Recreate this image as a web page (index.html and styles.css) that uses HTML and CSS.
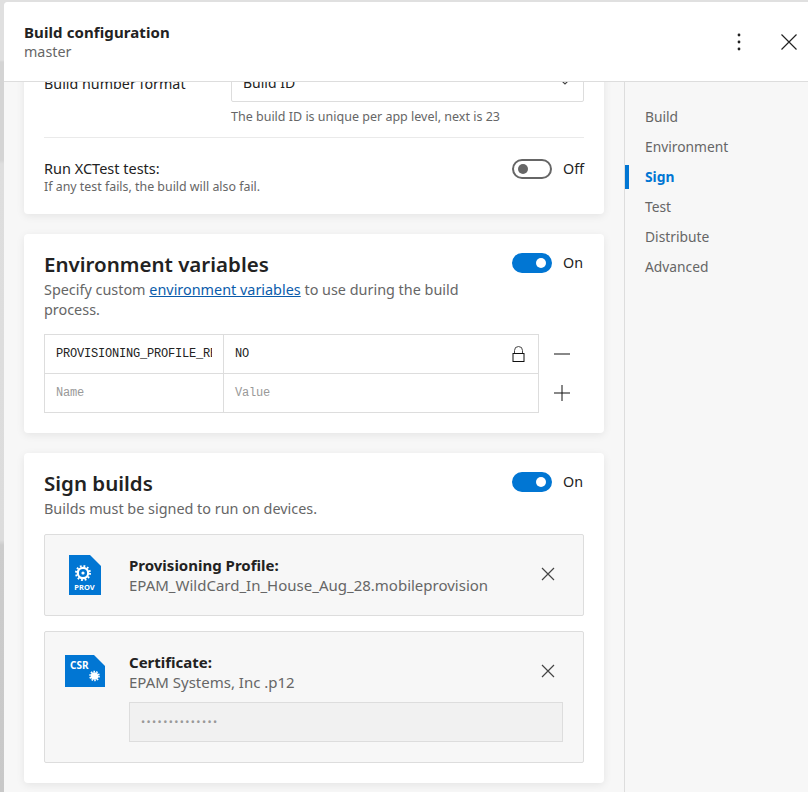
FILE: index.html
```html
<!DOCTYPE html>
<html lang="en">

<head>
    <meta charset="UTF-8">
    <meta name="viewport" content="width=device-width, initial-scale=1.0">
    <title>Build configuration</title>
    <link rel="stylesheet" href="styles.css">
</head>

<body>
    <div class="modal">
        <header class="modal-header">
            <div>
                <h1>Build configuration</h1>
                <div class="branch">master</div>
            </div>
            <div class="header-actions">
                <svg width="4" height="18" viewBox="0 0 4 18">
                    <circle cx="2" cy="2" r="1.4" fill="#222" />
                    <circle cx="2" cy="9" r="1.4" fill="#222" />
                    <circle cx="2" cy="16" r="1.4" fill="#222" />
                </svg>
                <svg width="16" height="16" viewBox="0 0 16 16">
                    <path d="M0.5 0.5L15.5 15.5M15.5 0.5L0.5 15.5" stroke="#222" stroke-width="1.2" fill="none" />
                </svg>
            </div>
        </header>

        <div class="modal-body">
            <main class="content">
                <!-- First card is scrolled under the header -->
                <section class="card card-build">
                    <div class="format-row">
                        <label>Build number format</label>
                        <div class="format-field">
                            <div class="select">
                                <span>Build ID</span>
                                <svg width="8" height="5" viewBox="0 0 8 5">
                                    <path d="M0.8 0.8L4 4L7.2 0.8" stroke="#444" stroke-width="1.2" fill="none" />
                                </svg>
                            </div>
                            <p class="hint">The build ID is unique per app level, next is 23</p>
                        </div>
                    </div>
                    <div class="xctest-row">
                        <div>
                            <div class="xctest-title">Run XCTest tests:</div>
                            <div class="xctest-sub">If any test fails, the build will also fail.</div>
                        </div>
                        <div class="switch-wrap">
                            <span class="switch"></span>
                            <span class="switch-label">Off</span>
                        </div>
                    </div>
                </section>

                <section class="card">
                    <div class="card-head">
                        <div class="card-intro">
                            <h2>Environment variables</h2>
                            <p>Specify custom <a href="#">environment variables</a> to use during the build process.</p>
                        </div>
                        <div class="switch-wrap">
                            <span class="switch on"></span>
                            <span class="switch-label">On</span>
                        </div>
                    </div>
                    <div class="env-wrap">
                        <div class="env-table">
                            <div class="env-row">
                                <div class="env-name"><span>PROVISIONING_PROFILE_REQUIRED</span></div>
                                <div class="env-value">
                                    <span>NO</span>
                                    <svg width="13" height="16" viewBox="0 0 13 16">
                                        <path d="M2.5 7V4.5a4 4 0 0 1 8 0V7" stroke="#444" fill="none" />
                                        <rect x="1" y="7.5" width="11" height="8" stroke="#111" fill="#fff" />
                                    </svg>
                                </div>
                            </div>
                            <div class="env-row">
                                <div class="env-name placeholder">Name</div>
                                <div class="env-value placeholder">Value</div>
                            </div>
                        </div>
                        <div class="env-actions">
                            <svg width="16" height="16" viewBox="0 0 16 16">
                                <path d="M0 8H16" stroke="#888" stroke-width="2" />
                            </svg>
                            <svg width="16" height="16" viewBox="0 0 16 16">
                                <path d="M0 8H16" stroke="#888" stroke-width="2" />
                                <path d="M8 0V16" stroke="#111" stroke-width="1" />
                            </svg>
                        </div>
                    </div>
                </section>

                <section class="card">
                    <div class="card-head">
                        <div class="card-intro">
                            <h2>Sign builds</h2>
                            <p>Builds must be signed to run on devices.</p>
                        </div>
                        <div class="switch-wrap">
                            <span class="switch on"></span>
                            <span class="switch-label">On</span>
                        </div>
                    </div>

                    <div class="file-box file-prov">
                        <svg class="file-icon" width="32" height="40" viewBox="0 0 32 40">
                            <path d="M0 0H21L32 11V40H0Z" fill="#0176d3" />
                            <g fill="none" stroke="#fff">
                                <circle cx="14" cy="18" r="5.2" stroke-width="2.2" />
                                <circle cx="14" cy="18" r="7" stroke-width="2" stroke-dasharray="1.8 1.9" />
                            </g>
                            <circle cx="14" cy="18" r="1.6" fill="#fff" />
                            <text x="15.5" y="34.5" class="icon-label" text-anchor="middle">PROV</text>
                        </svg>
                        <div class="file-info">
                            <div class="file-title">Provisioning Profile:</div>
                            <div class="file-name">EPAM_WildCard_In_House_Aug_28.mobileprovision</div>
                        </div>
                        <svg class="file-remove" width="14" height="14" viewBox="0 0 14 14">
                            <path d="M1 1L13 13M13 1L1 13" stroke="#444" stroke-width="1.2" fill="none" />
                        </svg>
                    </div>

                    <div class="file-box file-cert">
                        <svg class="file-icon" width="40" height="32" viewBox="0 0 40 32">
                            <path d="M0 0H29L40 11V32H0Z" fill="#0176d3" />
                            <text x="5" y="13.5" class="icon-label cert-label">CSR</text>
                            <circle cx="29.5" cy="21" r="3.8" fill="#fff" />
                            <circle cx="29.5" cy="21" r="4.5" fill="none" stroke="#fff" stroke-width="1.6" stroke-dasharray="1.6 1.2" />
                        </svg>
                        <div class="file-info">
                            <div class="file-title">Certificate:</div>
                            <div class="file-name">EPAM Systems, Inc .p12</div>
                            <div class="password">••••••••••••••</div>
                        </div>
                        <svg class="file-remove" width="14" height="14" viewBox="0 0 14 14">
                            <path d="M1 1L13 13M13 1L1 13" stroke="#444" stroke-width="1.2" fill="none" />
                        </svg>
                    </div>
                </section>
            </main>

            <nav class="side-nav">
                <a href="#">Build</a>
                <a href="#">Environment</a>
                <a href="#" class="active">Sign</a>
                <a href="#">Test</a>
                <a href="#">Distribute</a>
                <a href="#">Advanced</a>
            </nav>
        </div>
    </div>
</body>

</html>
```

FILE: styles.css
```css
* {
    box-sizing: border-box;
}

html,
body {
    height: 100%;
}

body {
    margin: 0;
    padding: 2px 0 0 4px;
    overflow: hidden;
    background: linear-gradient(#e0e0e0 0, #e0e0e0 60px, #d4d4d4 62px, #d4d4d4 160px, #dedede 164px, #dcdcdc 540px, #cccccc 545px, #c8c8c8 100%);
    font-family: "Noto Sans", "Open Sans", sans-serif;
    color: #222;
}

.modal {
    height: 100%;
    display: flex;
    flex-direction: column;
    background-color: #f7f7f7;
    border-radius: 4px 0 0 0;
}

/* Header */
.modal-header {
    flex: none;
    height: 80px;
    display: flex;
    align-items: center;
    justify-content: space-between;
    padding: 0 11px 0 20px;
    background-color: #fff;
    border-bottom: 1px solid #ddd;
    border-radius: 4px 0 0 0;
    position: relative;
    z-index: 1;
}

.modal-header h1 {
    margin: 0;
    font-size: 15px;
    line-height: 20px;
    font-weight: 700;
    letter-spacing: 0.1px;
}

.branch {
    font-size: 14.3px;
    line-height: 20px;
    color: #666;
}

.header-actions {
    display: flex;
    align-items: center;
    gap: 40px;
}

/* Body */
.modal-body {
    flex: 1;
    min-height: 0;
    display: flex;
}

.content {
    width: 620px;
    flex: none;
    padding: 0 20px;
    overflow: hidden;
}

.side-nav {
    flex: 1;
    padding-top: 20px;
    border-left: 1px solid #ddd;
    display: flex;
    flex-direction: column;
}

.side-nav a {
    height: 30px;
    line-height: 30px;
    padding-left: 20px;
    font-size: 13.8px;
    color: #666;
    text-decoration: none;
}

.side-nav a.active {
    color: #0176d3;
    font-weight: 700;
    border-left: 4px solid #0176d3;
    padding-left: 16px;
    height: 24px;
    line-height: 24px;
    margin: 3px 0;
}

/* Cards */
.card {
    width: 580px;
    margin-bottom: 20px;
    padding: 20px;
    background-color: #fff;
    border-radius: 4px;
    box-shadow: 0 2px 8px rgba(0, 0, 0, 0.08);
}

.card-build {
    margin-top: -20px;
    padding-top: 0;
    padding-bottom: 19px;
}

.format-row {
    display: flex;
    padding-bottom: 11px;
    border-bottom: 1px solid #eaeaea;
}

.format-row label {
    width: 187px;
    padding-top: 12px;
    font-size: 14.3px;
    line-height: 20px;
}

.format-field {
    flex: 1;
}

.select {
    height: 40px;
    display: flex;
    align-items: center;
    justify-content: space-between;
    padding: 0 14px 0 11px;
    border: 1px solid #ddd;
    border-radius: 0 0 2px 2px;
    font-size: 14px;
}

.hint {
    margin: 6px 0 0;
    font-size: 12.5px;
    line-height: 18px;
    color: #666;
}

.xctest-row {
    display: flex;
    justify-content: space-between;
    align-items: flex-start;
    padding-top: 20px;
}

.xctest-title {
    font-size: 14.5px;
    line-height: 21px;
}

.xctest-sub {
    font-size: 12.4px;
    line-height: 16px;
    color: #666;
}

.switch-wrap {
    display: flex;
    align-items: center;
    gap: 11px;
    font-size: 14.3px;
    line-height: 20px;
}

.switch-label {
    width: 21px;
}

.xctest-row .switch-wrap {
    margin-top: 1px;
}

.switch {
    width: 40px;
    height: 20px;
    display: flex;
    align-items: center;
    padding: 0 4px;
    border: 2px solid #666;
    border-radius: 10px;
}

.switch::after {
    content: "";
    width: 10px;
    height: 10px;
    border-radius: 50%;
    background-color: #666;
}

.switch.on {
    justify-content: flex-end;
    background-color: #0176d3;
    border-color: #0176d3;
}

.switch.on::after {
    background-color: #fff;
}

.card-head {
    display: flex;
    justify-content: space-between;
    align-items: flex-start;
}

.card-head .switch-wrap {
    margin-top: -1px;
}

.card-intro {
    width: 430px;
}

.card-intro h2 {
    margin: 0;
    font-size: 20.5px;
    line-height: 20px;
    font-weight: 600;
}

.card-intro p {
    margin: 6px 0 0;
    font-size: 14.4px;
    line-height: 20px;
    color: #666;
}

.card-intro a {
    color: #0b5cab;
}

/* Environment table */
.env-wrap {
    display: flex;
    margin-top: 14px;
}

.env-table {
    width: 495px;
    border: 1px solid #ddd;
}

.env-row {
    display: flex;
    height: 38px;
}

.env-row + .env-row {
    height: 39px;
    border-top: 1px solid #ddd;
}

.env-name,
.env-value {
    display: flex;
    align-items: center;
    font-family: "Liberation Mono", monospace;
    font-size: 12px;
    letter-spacing: -0.2px;
}

.env-name {
    width: 179px;
    padding: 0 11px;
    border-right: 1px solid #ddd;
}

.env-name span {
    overflow: hidden;
    white-space: nowrap;
}

.env-value {
    flex: 1;
    justify-content: space-between;
    padding: 0 13px 0 11px;
}

.placeholder {
    color: #999;
}

.env-actions {
    flex: 1;
    display: flex;
    flex-direction: column;
    justify-content: space-around;
    align-items: center;
    padding-left: 1px;
}

/* Uploaded files */
.file-box {
    position: relative;
    display: flex;
    margin-top: 15px;
    background-color: #f7f7f7;
    border: 1px solid #ddd;
    border-radius: 2px;
}

.file-prov {
    height: 82px;
    align-items: center;
    padding-left: 24px;
}

.file-prov .file-info {
    margin-left: 28px;
}

.file-cert {
    height: 132px;
    padding: 20px 20px 0 20px;
}

.file-cert .file-info {
    flex: 1;
    margin-left: 24px;
}

.file-cert .file-icon {
    margin-top: 3px;
}

.icon-label {
    fill: #fff;
    font-family: "Noto Sans", sans-serif;
    font-size: 7.5px;
    font-weight: 700;
}

.cert-label {
    font-size: 10px;
}

.file-title {
    font-size: 15px;
    line-height: 20px;
    font-weight: 700;
}

.file-name {
    font-size: 15px;
    line-height: 20px;
    color: #666;
}

.file-remove {
    position: absolute;
    right: 28px;
    top: 32px;
}

.password {
    height: 40px;
    margin-top: 10px;
    padding-left: 11px;
    line-height: 38px;
    font-size: 11px;
    letter-spacing: 1.4px;
    color: #999;
    background-color: #f1f1f1;
    border: 1px solid #ddd;
}
```
